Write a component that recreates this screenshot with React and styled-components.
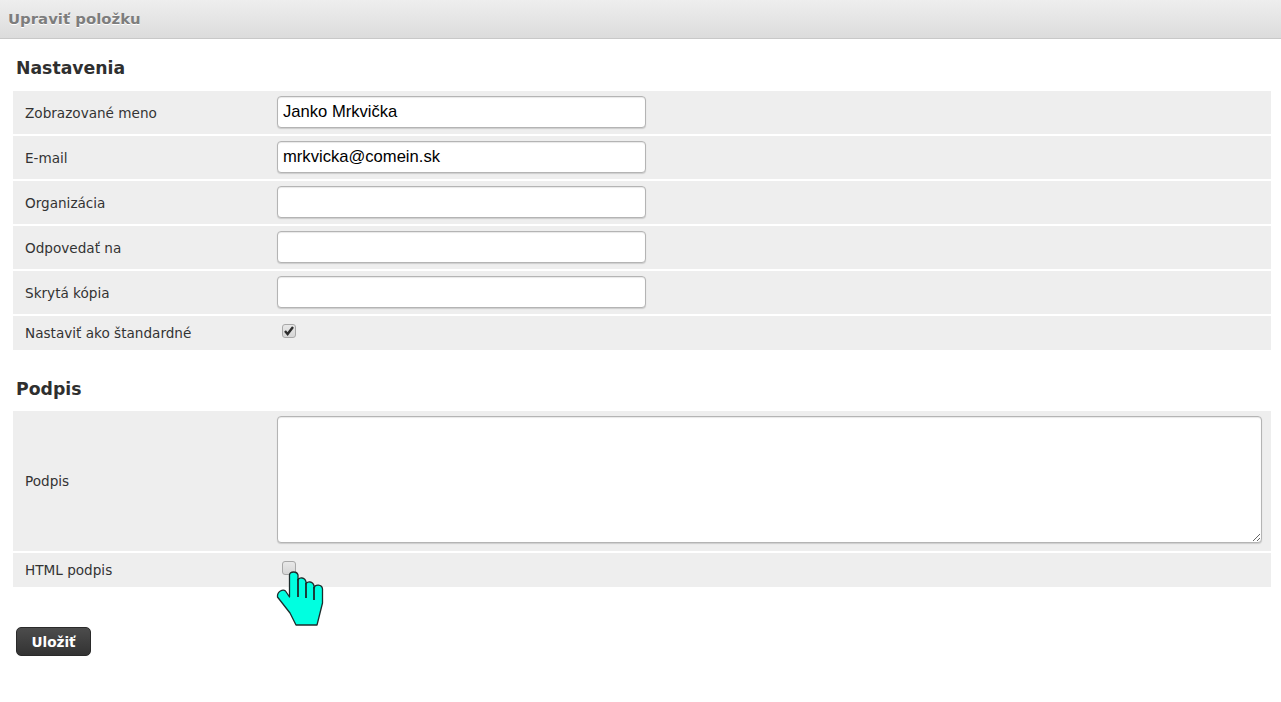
import React from "react";
import styled, { createGlobalStyle } from "styled-components";

const Global = createGlobalStyle`
  html, body { margin: 0; padding: 0; background: #fff; }
  body { font-family: "DejaVu Sans", Verdana, sans-serif; color: #333; }
`;
const Page = styled.div`
  position: relative;
  width: 1281px;
  height: 702px;
  overflow: hidden;
`;
const TitleBar = styled.div`
  height: 38px;
  box-sizing: content-box;
  border-bottom: 1px solid #c8c8c8;
  background: linear-gradient(#eeeeee, #dcdcdc);
  display: flex;
  align-items: center;
  padding-left: 8px;
  font-size: 14.9px;
  font-weight: bold;
  color: #7d7d7d;
  text-shadow: 0 1px 0 #fff;
`;
const Content = styled.div`
  padding: 0 10px 0 13px;
`;
const Heading = styled.h2`
  margin: 0;
  padding-left: 3px;
  font-size: 17.3px;
  line-height: 20px;
  font-weight: bold;
  color: #2f2f2f;
  padding-top: ${p => p.$top}px;
  padding-bottom: ${p => p.$bottom}px;
`;
const Rows = styled.div`
  display: flex;
  flex-direction: column;
  gap: 2px;
`;
const Row = styled.div`
  display: flex;
  align-items: center;
  background: #eeeeee;
  min-height: ${p => p.$h}px;
`;
const Label = styled.label`
  width: 264px;
  padding-left: 12px;
  box-sizing: border-box;
  font-size: 13.6px;
  color: #333;
`;
const TextField = styled.input`
  width: 369px;
  height: 32px;
  margin-bottom: 2px;
  box-sizing: border-box;
  border: 1px solid #b4b4b4;
  border-radius: 4px;
  background: #fff;
  box-shadow: inset 0 1px 1px #e8e8e8, 0 1px 1px #ccc;
  padding: 0 5px;
  font-family: "Liberation Sans", Arial, sans-serif;
  font-size: 16.6px;
  color: #000;
  outline: none;
`;
const TextArea = styled.textarea`
  display: block;
  width: 985px;
  height: 127px;
  margin-bottom: 4px;
  box-sizing: border-box;
  border: 1px solid #b4b4b4;
  border-radius: 4px;
  background: #fff;
  box-shadow: inset 0 1px 1px #e8e8e8, 0 1px 1px #ccc;
  outline: none;
  resize: vertical;
`;
const CheckBox = styled.span`
  display: flex;
  align-items: center;
  justify-content: center;
  box-sizing: border-box;
  width: 14px;
  height: 14px;
  margin: ${p => p.$margin};
  border: 1px solid #a8a8a8;
  border-radius: 3px;
  background: linear-gradient(#e8e8e8, #d6d6d6);
`;
const SaveButton = styled.button`
  display: block;
  margin: 40px 0 0 3px;
  width: 75px;
  height: 29px;
  border: 1px solid #2a2a2a;
  border-radius: 5px;
  background: linear-gradient(#4c4c4c, #333);
  color: #fff;
  font-family: "DejaVu Sans", Verdana, sans-serif;
  font-size: 13.6px;
  font-weight: bold;
  padding: 0;
`;
const Cursor = styled.svg`
  position: absolute;
  left: 275px;
  top: 570px;
`;

const fields = [
  ["Zobrazované meno", "Janko Mrkvička"],
  ["E-mail", "mrkvicka@comein.sk"],
  ["Organizácia", ""],
  ["Odpovedať na", ""],
  ["Skrytá kópia", ""],
];

export default function App() {
  return (
    <Page>
      <Global />
      <TitleBar>Upraviť položku</TitleBar>
      <Content>
        <Heading $top={19} $bottom={13}>Nastavenia</Heading>
        <Rows>
          {fields.map(([l, v]) => (
            <Row key={l} $h={43}>
              <Label>{l}</Label>
              <TextField defaultValue={v} />
            </Row>
          ))}
          <Row $h={34}>
            <Label>Nastaviť ako štandardné</Label>
            <CheckBox $margin="-4px 0 0 5px">
              <svg width="12" height="12" viewBox="0 0 12 12">
                <path d="M2 6 L4.6 9 L10 2" fill="none" stroke="#2c2c2c" strokeWidth="2.4" />
              </svg>
            </CheckBox>
          </Row>
        </Rows>
        <Heading $top={29} $bottom={12}>Podpis</Heading>
        <Rows>
          <Row $h={140}>
            <Label>Podpis</Label>
            <TextArea />
          </Row>
          <Row $h={34}>
            <Label>HTML podpis</Label>
            <CheckBox $margin="-4px 0 0 5px" />
          </Row>
        </Rows>
        <SaveButton>Uložiť</SaveButton>
      </Content>
      <Cursor width="52" height="60" viewBox="0 0 52 60">
        <path
          d="M14.5 5 C15 1 22 1 23 5 L23 10 C24 7 30 7 31 12 L31 14 C32 11 38 11 39 16 L39 18 C40 14 47 14 47.5 19 L47.5 33 L42 55 L21 55 L15 43 L2.5 27 C2 21 8 19 10.5 21 L14.5 27 Z"
          fill="#00ffe0"
          stroke="#1c2c2c"
          strokeWidth="1.3"
          strokeLinejoin="round"
        />
        <path d="M23 9 L23 27 M31 13 L31 28 M39 17 L39 30" stroke="#1c2c2c" strokeWidth="1.8" fill="none" />
      </Cursor>
    </Page>
  );
}
